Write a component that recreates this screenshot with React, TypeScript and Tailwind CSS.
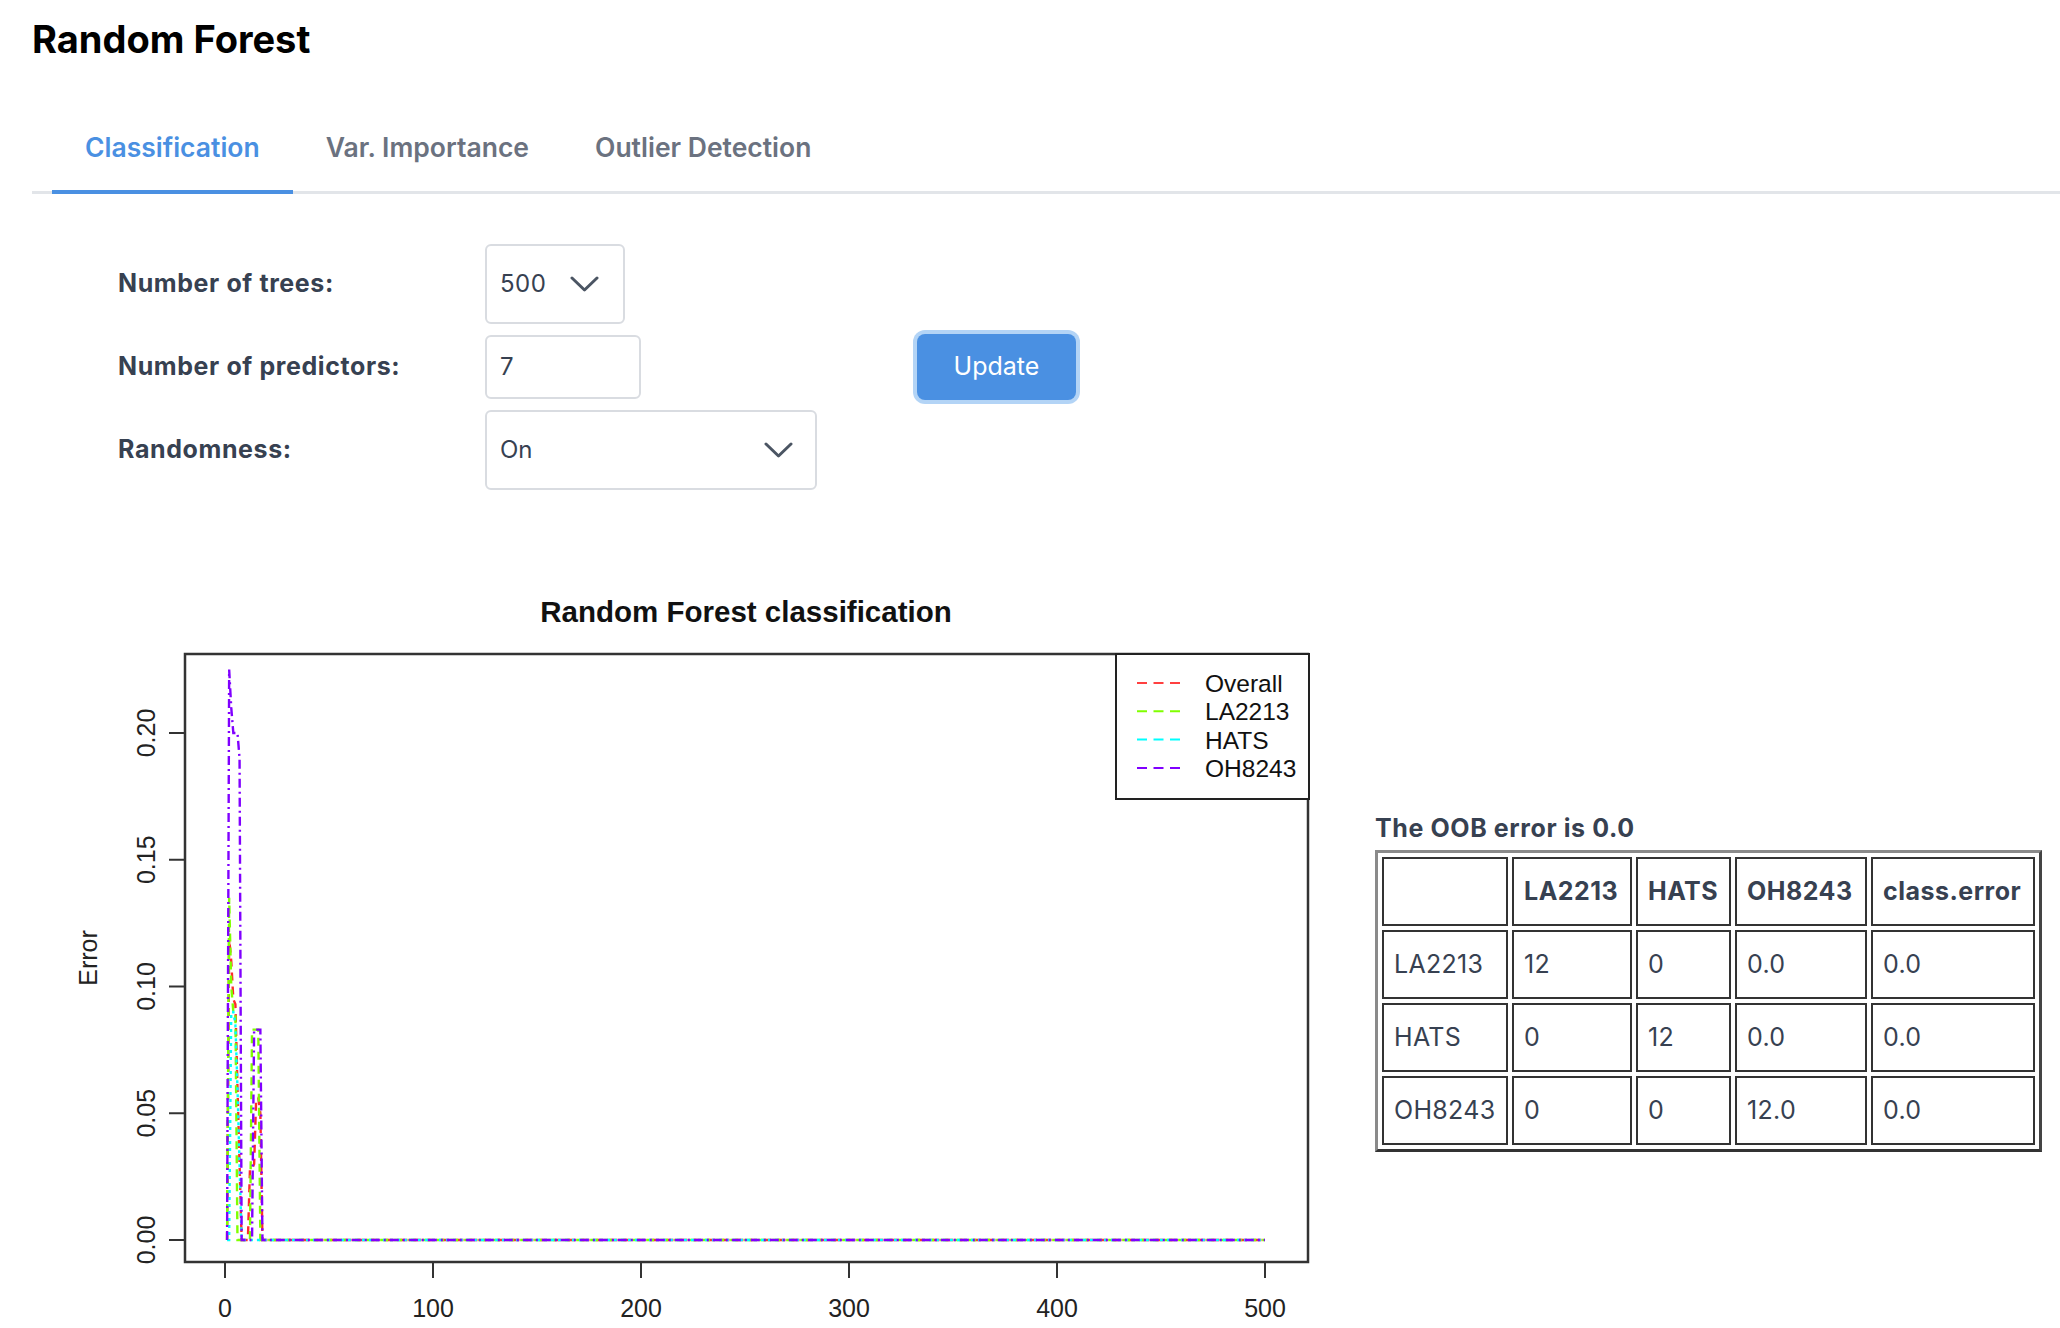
import { useState } from 'react'

type Series = { color: string; dash: string; values: number[] }

// plot geometry, in page pixels (the svg viewBox starts at the page origin of the chart block)
const xOf = (n: number) => 225 + 2.08 * n
const yOf = (v: number) => 1239 - 2535 * v

const SERIES: Series[] = [
  {
    color: '#ff2a2a',
    dash: '8 6',
    values: [0, 0.119, 0.11, 0.095, 0.093, 0.06, 0.03, 0, 0, 0, 0, 0.028, 0.028, 0.03, 0.056, 0.056, 0.05, 0],
  },
  {
    color: '#80ff00',
    dash: '8 6',
    values: [0, 0.135, 0.1, 0.09, 0.09, 0, 0, 0, 0, 0, 0, 0, 0.083, 0.083, 0.083, 0.083, 0, 0],
  },
  {
    color: '#00ffff',
    dash: '3 4',
    values: [0, 0, 0.09, 0.09, 0.085, 0.06, 0.03, 0, 0, 0, 0, 0, 0, 0, 0, 0, 0, 0],
  },
  {
    color: '#8000ff',
    dash: '9 4 2 4',
    values: [0, 0.225, 0.21, 0.2, 0.2, 0.2, 0.19, 0, 0, 0, 0, 0, 0, 0.083, 0.083, 0.083, 0.083, 0],
  },
]

const LEGEND = [
  { label: 'Overall', color: '#ff4040' },
  { label: 'LA2213', color: '#80ff00' },
  { label: 'HATS', color: '#00ffff' },
  { label: 'OH8243', color: '#8000ff' },
]

const TABLE_HEAD = ['', 'LA2213', 'HATS', 'OH8243', 'class.error']
const TABLE_ROWS = [
  ['LA2213', '12', '0', '0.0', '0.0'],
  ['HATS', '0', '12', '0.0', '0.0'],
  ['OH8243', '0', '0', '12.0', '0.0'],
]
const COL_W = ['w-[126px]', 'w-[120px]', 'w-[95px]', 'w-[132px]', 'w-[164px]']

function Chevron() {
  return (
    <svg width="29" height="16" viewBox="0 0 29 16" fill="none" className="shrink-0">
      <path d="M2 2 L14.5 14 L27 2" stroke="#4b5563" strokeWidth="3" strokeLinecap="round" strokeLinejoin="round" />
    </svg>
  )
}

function toPoints(values: number[]) {
  const pts = values.map((v, i) => `${xOf(i + 1)},${yOf(v)}`)
  pts.push(`${xOf(500)},${yOf(0)}`)
  return pts.join(' ')
}

function ErrorPlot() {
  const font = "'Liberation Sans', Arial, sans-serif"
  return (
    <svg width="1343" height="768" viewBox="32 560 1343 768" className="block shrink-0">
      <text x="746" y="621" textAnchor="middle" fontFamily={font} fontWeight="700" fontSize="29.5" fill="#111">
        Random Forest classification
      </text>

      {SERIES.map((s) => (
        <polyline key={s.color} points={toPoints(s.values)} fill="none" stroke={s.color} strokeWidth="2.4" strokeDasharray={s.dash} />
      ))}

      <rect x="185" y="653" width="1123" height="608" fill="none" stroke="#333" strokeWidth="2.5" />

      {/* y axis */}
      {[0, 0.05, 0.1, 0.15, 0.2].map((v) => (
        <g key={v}>
          <line x1="169" x2="185" y1={yOf(v)} y2={yOf(v)} stroke="#333" strokeWidth="2" />
          <text
            x="155"
            y={yOf(v)}
            transform={`rotate(-90 155 ${yOf(v)})`}
            textAnchor="middle"
            fontFamily={font}
            fontSize="25"
            fill="#222"
          >
            {v.toFixed(2)}
          </text>
        </g>
      ))}
      <text x="97" y="957" transform="rotate(-90 97 957)" textAnchor="middle" fontFamily={font} fontSize="25" fill="#222">
        Error
      </text>

      {/* x axis */}
      {[0, 100, 200, 300, 400, 500].map((n) => (
        <g key={n}>
          <line x1={xOf(n)} x2={xOf(n)} y1="1261" y2="1277" stroke="#333" strokeWidth="2" />
          <text x={xOf(n)} y="1316" textAnchor="middle" fontFamily={font} fontSize="25" fill="#222">
            {n}
          </text>
        </g>
      ))}

      {/* legend */}
      <rect x="1116" y="653" width="193" height="145" fill="#fff" stroke="#222" strokeWidth="2" />
      {LEGEND.map((l, i) => {
        const y = 682 + i * 28.3
        return (
          <g key={l.label}>
            <line x1="1137" x2="1180" y1={y} y2={y} stroke={l.color} strokeWidth="2" strokeDasharray="10 6.5" />
            <text x="1205" y={y + 9} fontFamily={font} fontSize="24.5" fill="#111">
              {l.label}
            </text>
          </g>
        )
      })}
    </svg>
  )
}

export default function App() {
  const [tab, setTab] = useState('Classification')
  const tabs = ['Classification', 'Var. Importance', 'Outlier Detection']

  return (
    <div className="h-[1328px] overflow-hidden bg-white pl-8 pt-[16px] font-[Inter] text-[#374151]">
      <h1 className="text-[38px] leading-[46px] font-bold text-black">Random Forest</h1>

      <div className="mt-[40px] flex border-b-[3px] border-[#e2e5e9] pl-5">
        {tabs.map((t) => (
          <button
            key={t}
            onClick={() => setTab(t)}
            className={`-mb-[3px] border-b-4 px-[33px] pt-[29px] pb-[27px] text-[26.5px] leading-[32px] font-semibold ${
              tab === t ? 'border-[#4a90e2] text-[#4a90e2]' : 'border-transparent text-[#6b7280]'
            }`}
          >
            {t}
          </button>
        ))}
      </div>

      <div className="mt-[50px] ml-[86px] grid grid-cols-[367px_432px_auto] items-center gap-y-[10px]">
        <label className="text-[25px] font-bold tracking-[0.6px]">Number of trees:</label>
        <div className="flex h-[80px] w-[140px] items-center justify-between rounded-[6px] border-2 border-[#d9dce1] pr-[24px] pl-[13px] text-[24px]">
          <span className="tracking-[0.5px]">500</span>
          <Chevron />
        </div>
        <div />

        <label className="text-[25px] font-bold tracking-[0.6px]">Number of predictors:</label>
        <div className="flex h-[64px] w-[156px] items-center rounded-[6px] border-2 border-[#d9dce1] pl-[13px] text-[24px]">
          7
        </div>
        <div>
          <button className="h-[66px] w-[159px] rounded-[8px] bg-[#4a90e2] text-[25px] text-white ring-4 ring-[#b3d4f6]">
            Update
          </button>
        </div>

        <label className="text-[25px] font-bold tracking-[0.6px]">Randomness:</label>
        <div className="flex h-[80px] w-[332px] items-center justify-between rounded-[6px] border-2 border-[#d9dce1] pr-[22px] pl-[13px] text-[24px]">
          <span>On</span>
          <Chevron />
        </div>
        <div />
      </div>

      <div className="mt-[71px] flex items-start">
        <ErrorPlot />

        <div className="mt-[251px]">
          <p className="mb-[6px] text-[25px] leading-[32px] font-bold tracking-[0.6px]">The OOB error is 0.0</p>
          <table className="border-separate border-spacing-[4px] border-[3px] border-t-[#8a8a8a] border-r-[#444] border-b-[#333] border-l-[#8a8a8a] text-[25px] tracking-[0.3px]">
            <thead>
              <tr>
                {TABLE_HEAD.map((h, i) => (
                  <th key={i} className={`${COL_W[i]} h-[69px] border-2 border-[#333] px-[10px] text-left font-bold tracking-[0.5px]`}>
                    {h}
                  </th>
                ))}
              </tr>
            </thead>
            <tbody>
              {TABLE_ROWS.map((row) => (
                <tr key={row[0]}>
                  {row.map((c, i) => (
                    <td key={i} className={`${COL_W[i]} h-[69px] border-2 border-[#333] px-[10px]`}>
                      {c}
                    </td>
                  ))}
                </tr>
              ))}
            </tbody>
          </table>
        </div>
      </div>
    </div>
  )
}
